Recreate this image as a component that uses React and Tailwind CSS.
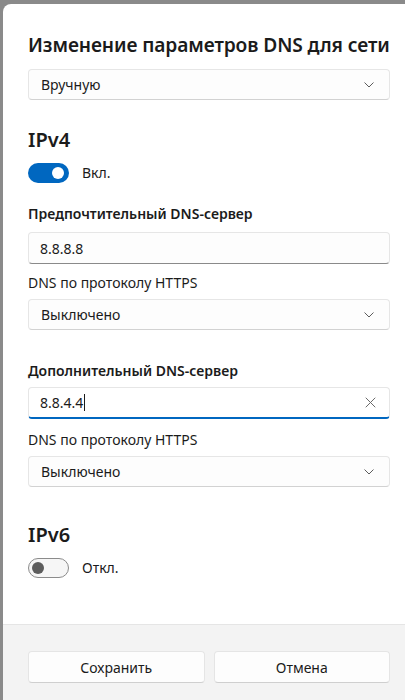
import React from 'react';

const font = { fontFamily: '"Segoe UI", "Noto Sans", sans-serif' };

const Chevron = () => (
  <svg width="10" height="6" viewBox="0 0 10 6" className="text-[#5c5c5c]">
    <path d="M0.8 0.8 L5 5 L9.2 0.8" fill="none" stroke="currentColor" strokeWidth="1" strokeLinecap="round" strokeLinejoin="round" />
  </svg>
);

const Select = ({ value, className = '' }) => (
  <div className={`h-[31px] w-full flex items-center justify-between pl-[12px] pr-[15px] bg-[#fdfdfd] border border-[#e6e6e6] border-b-[#d2d2d2] rounded-[4px] text-[14px] text-[#1b1b1b] ${className}`}>
    <span>{value}</span>
    <Chevron />
  </div>
);

const Toggle = ({ on, label, className = '' }) => (
  <div className={`h-[20px] flex items-center gap-[13px] ${className}`}>
    {on ? (
      <div className="w-[41px] h-[20px] rounded-full bg-[#0067c0] flex items-center justify-end pr-[5px]">
        <div className="w-[12px] h-[12px] rounded-full bg-white" />
      </div>
    ) : (
      <div className="w-[41px] h-[20px] rounded-full bg-[#f6f6f6] border border-[#8b8b8b] flex items-center pl-[3px]">
        <div className="w-[12px] h-[12px] rounded-full bg-[#5d5d5d]" />
      </div>
    )}
    <span className="text-[14px] leading-[20px] text-[#1b1b1b]">{label}</span>
  </div>
);

export default function App() {
  return (
    <div className="w-[405px] h-[700px] bg-[#8a8a8a] pl-[3px] pt-[4px] flex overflow-hidden" style={font}>
      <div className="flex-1 bg-white rounded-tl-[8px] flex flex-col">
        <div className="flex-1 pl-[25px] pt-[27px]">
          <div className="w-[362px] flex flex-col">
            <h1 className="text-[19.2px] leading-[28px] font-semibold tracking-[-0.1px] text-[#1b1b1b] whitespace-nowrap">
              Изменение параметров DNS для сети
            </h1>
            <Select value="Вручную" className="mt-[10px]" />

            <h2 className="mt-[26px] text-[20px] leading-[28px] font-semibold text-[#1b1b1b]">IPv4</h2>
            <Toggle on label="Вкл." className="mt-[9px]" />

            <div className="mt-[21px] text-[14px] leading-[20px] font-semibold text-[#1b1b1b]">Предпочтительный DNS-сервер</div>
            <div className="mt-[8px] h-[32px] w-full flex items-center pl-[11px] bg-[#fdfdfd] border border-[#e6e6e6] border-b-[#8a8a8a] rounded-[4px] text-[14px] text-[#1b1b1b]">
              8.8.8.8
            </div>

            <div className="mt-[9px] text-[14px] leading-[20px] text-[#1b1b1b]">DNS по протоколу HTTPS</div>
            <Select value="Выключено" className="mt-[6px]" />

            <div className="mt-[31px] text-[14px] leading-[20px] font-semibold text-[#1b1b1b]">Дополнительный DNS-сервер</div>
            <div className="mt-[6px] h-[32px] w-full flex items-center justify-between pl-[11px] pr-[13px] bg-white border border-[#e6e6e6] border-b-2 border-b-[#0067c0] rounded-[4px] text-[14px] text-[#1b1b1b]">
              <span className="flex items-center">
                8.8.4.4
                <span className="ml-[1px] w-[1px] h-[17px] bg-[#1b1b1b]" />
              </span>
              <svg width="11" height="11" viewBox="0 0 11 11" className="text-[#6a6a6a]">
                <path d="M1 1 L10 10 M10 1 L1 10" fill="none" stroke="currentColor" strokeWidth="1" strokeLinecap="round" />
              </svg>
            </div>

            <div className="mt-[11px] text-[14px] leading-[20px] text-[#1b1b1b]">DNS по протоколу HTTPS</div>
            <Select value="Выключено" className="mt-[6px]" />

            <h2 className="mt-[34px] text-[20px] leading-[28px] font-semibold text-[#1b1b1b]">IPv6</h2>
            <Toggle label="Откл." className="mt-[9px]" />
          </div>
        </div>

        <div className="h-[76px] bg-[#f3f3f3] border-t border-[#e5e5e5] pl-[25px] pt-[26px]">
          <div className="w-[362px] flex gap-[9px]">
            <button className="flex-1 h-[32px] bg-[#fdfdfd] border border-[#e5e5e5] border-b-[#cfcfcf] rounded-[4px] text-[14px] text-[#1b1b1b]">
              Сохранить
            </button>
            <button className="flex-1 h-[32px] bg-[#fdfdfd] border border-[#e5e5e5] border-b-[#cfcfcf] rounded-[4px] text-[14px] text-[#1b1b1b]">
              Отмена
            </button>
          </div>
        </div>
      </div>
    </div>
  );
}
